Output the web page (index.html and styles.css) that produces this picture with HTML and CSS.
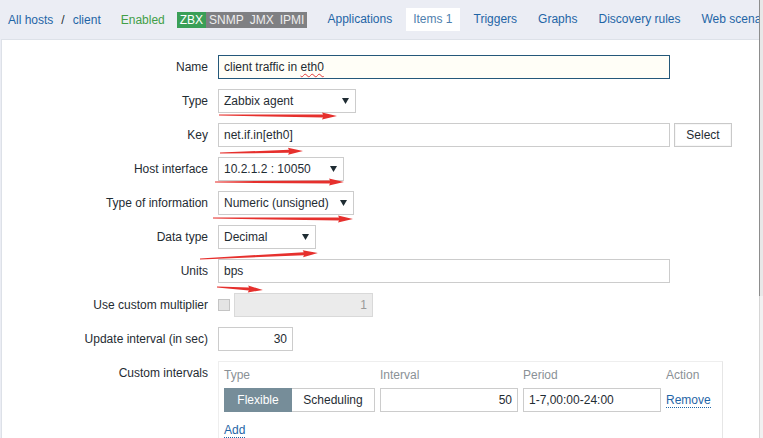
FILE: index.html
```html
<!DOCTYPE html>
<html>
<head>
<meta charset="utf-8">
<link rel="stylesheet" href="styles.css">
</head>
<body>
<div class="window">
  <div class="page">
    <div class="nav">
      <a class="link">All hosts</a>
      <span class="sep">/</span>
      <a class="link">client</a>
      <span class="status">Enabled</span>
      <span class="badges"><span class="bdg on">ZBX</span><span class="bdg">SNMP</span><span class="bdg">JMX</span><span class="bdg">IPMI</span></span>
      <div class="tabs">
        <a class="tab">Applications</a>
        <a class="tab active">Items 1</a>
        <a class="tab">Triggers</a>
        <a class="tab">Graphs</a>
        <a class="tab">Discovery rules</a>
        <a class="tab">Web scenarios</a>
      </div>
    </div>
    <div class="panel">
      <div class="form">
        <div class="label">Name</div>
        <div class="field"><div class="textbox wide focus">client traffic in <span class="spell">eth0</span></div></div>

        <div class="label">Type</div>
        <div class="field"><div class="select w-type"><span>Zabbix agent</span><svg class="caret" width="7" height="6" viewBox="0 0 7 6"><path d="M0 0H7L3.5 6Z"/></svg></div></div>

        <div class="label">Key</div>
        <div class="field row"><div class="textbox wide">net.if.in[eth0]</div><div class="btn">Select</div></div>

        <div class="label">Host interface</div>
        <div class="field"><div class="select w-host"><span>10.2.1.2 : 10050</span><svg class="caret" width="7" height="6" viewBox="0 0 7 6"><path d="M0 0H7L3.5 6Z"/></svg></div></div>

        <div class="label">Type of information</div>
        <div class="field"><div class="select w-info"><span>Numeric (unsigned)</span><svg class="caret" width="7" height="6" viewBox="0 0 7 6"><path d="M0 0H7L3.5 6Z"/></svg></div></div>

        <div class="label">Data type</div>
        <div class="field"><div class="select w-data"><span>Decimal</span><svg class="caret" width="7" height="6" viewBox="0 0 7 6"><path d="M0 0H7L3.5 6Z"/></svg></div></div>

        <div class="label">Units</div>
        <div class="field"><div class="textbox wide">bps</div></div>

        <div class="label">Use custom multiplier</div>
        <div class="field row"><span class="checkbox"></span><div class="textbox disabled num">1</div></div>

        <div class="label">Update interval (in sec)</div>
        <div class="field"><div class="textbox small num">30</div></div>

        <div class="label">Custom intervals</div>
        <div class="field">
          <div class="intervals">
            <div class="ih">Type</div>
            <div class="ih">Interval</div>
            <div class="ih">Period</div>
            <div class="ih">Action</div>
            <div class="seg"><span class="seg-on">Flexible</span><span class="seg-off">Scheduling</span></div>
            <div class="textbox num">50</div>
            <div class="textbox">1-7,00:00-24:00</div>
            <div class="act"><a class="dlink">Remove</a></div>
            <div class="add"><a class="dlink">Add</a></div>
          </div>
        </div>
      </div>
    </div>
    <svg class="marks" width="759" height="438" viewBox="0 0 759 438">
      <g fill="#e6302d">
        <path transform="translate(219 115) rotate(0.49)" d="M0 -.6L104 -1.5L103 -3.5L118 0L103 3.5L104 1.5L0 .6Z"/>
        <path transform="translate(220 153) rotate(-1.38)" d="M0 -.6L69 -1.5L68 -3.5L83 0L68 3.5L69 1.5L0 .6Z"/>
        <path transform="translate(215 182) rotate(0)" d="M0 -.6L115 -1.5L114 -3.5L129 0L114 3.5L115 1.5L0 .6Z"/>
        <path transform="translate(213 218) rotate(0.41)" d="M0 -.6L126 -1.5L125 -3.5L140 0L125 3.5L126 1.5L0 .6Z"/>
        <path transform="translate(200 259) rotate(-2.9)" d="M0 -.6L104 -1.5L103 -3.5L118 0L103 3.5L104 1.5L0 .6Z"/>
        <path transform="translate(217 287) rotate(3.7)" d="M0 -.6L32 -1.5L31 -3.5L46 0L31 3.5L32 1.5L0 .6Z"/>
      </g>
    </svg>
  </div>
  <div class="scrollbar"><div class="thumb"></div><div class="track"></div></div>
</div>
</body>
</html>
```

FILE: styles.css
```css
* { box-sizing: border-box; }
html, body { margin: 0; padding: 0; }
body {
  width: 763px;
  height: 438px;
  overflow: hidden;
  background: #ebedf4;
  font-family: "Liberation Sans", Arial, sans-serif;
  font-size: 12px;
  color: #1f2c33;
}
.window { display: flex; width: 763px; height: 438px; }
.page {
  position: relative;
  width: 759px;
  height: 438px;
  display: flex;
  flex-direction: column;
  overflow: hidden;
}
.scrollbar { width: 4px; display: flex; flex-direction: column; }
.thumb { height: 296px; border-left: 1px solid #8d8d8d; background: #e8e8e8; }
.track { flex: 1; border-left: 1px solid #d6d6d6; background: #f1f1f1; }

/* nav */
.nav {
  height: 39px;
  flex: none;
  display: flex;
  align-items: center;
  padding-left: 8px;
  white-space: nowrap;
}
.link { color: #1f65a6; }
.sep { margin: 0 8px; color: #1f2c33; }
.status { color: #429e47; margin-left: 20px; }
.badges { display: flex; margin-left: 12px; height: 16px; }
.bdg {
  display: block;
  height: 16px;
  line-height: 16px;
  padding: 0 3px;
  background: #7f8083;
  color: #eeeeee;
}
.bdg.on { background: #3a9f57; color: #ffffff; }
.tabs { display: flex; gap: 7px; margin-left: 13px; }
.tab {
  display: block;
  height: 23px;
  line-height: 23px;
  padding: 0 7px;
  color: #1f65a6;
}
.tab.active { background: #ffffff; color: #4f7fae; }

/* panel */
.panel {
  flex: 1;
  margin-left: 1px;
  background: #ffffff;
  border-left: 1px solid #dde1e8;
  border-top: 1px solid #dde1e8;
  padding-top: 15px;
}
.form {
  display: grid;
  grid-template-columns: 206px auto;
  column-gap: 10px;
  row-gap: 10px;
}
.label {
  text-align: right;
  line-height: 24px;
  white-space: nowrap;
}
.field { min-height: 24px; }
.row { display: flex; align-items: center; gap: 4px; }

.textbox {
  height: 24px;
  line-height: 22px;
  border: 1px solid #cccccc;
  padding: 0 5px;
  background: #ffffff;
  white-space: nowrap;
  overflow: hidden;
}
.textbox.wide { width: 452px; }
.textbox.focus { border-color: #24587a; background: #fffef7; }
.spell { text-decoration: underline wavy #e23b3b; text-decoration-thickness: 1px; text-underline-offset: 2px; }
.textbox.num { text-align: right; }
.textbox.small { width: 75px; }
.textbox.disabled { width: 139px; background: #ebebeb; border-color: #d9d9d9; color: #9a9a9a; }

.checkbox {
  width: 12px;
  height: 12px;
  border: 1px solid #c4c4c4;
  background: #e4e4e4;
  display: block;
}

.select {
  height: 24px;
  border: 1px solid #cccccc;
  padding: 0 6px 0 5px;
  display: flex;
  align-items: center;
  justify-content: space-between;
  background: #ffffff;
  white-space: nowrap;
}
.caret { fill: #1f2c33; }
.w-type { width: 138px; }
.w-host { width: 126px; }
.w-info { width: 136px; }
.w-data { width: 98px; }

.btn {
  width: 58px;
  height: 24px;
  line-height: 22px;
  border: 1px solid #c9c9c9;
  text-align: center;
  background: #ffffff;
  box-shadow: inset 0 0 0 1px #f7f7f7;
}

/* custom intervals */
.intervals {
  width: 505px;
  border: 1px solid #eeeeee;
  border-right-color: #e6e6e6;
  padding: 5px 9px 10px 5px;
  display: grid;
  grid-template-columns: 151px 138px 138px auto;
  column-gap: 5px;
  row-gap: 5px;
}
.ih { line-height: 16px; color: #8a9196; }
.seg { display: flex; height: 24px; }
.seg-on {
  width: 68px;
  background: #768d99;
  border: 1px solid #768d99;
  color: #ffffff;
  text-align: center;
  line-height: 22px;
}
.seg-off {
  width: 83px;
  border: 1px solid #cccccc;
  border-left: none;
  text-align: center;
  line-height: 22px;
}
.act { line-height: 24px; }
.dlink { color: #1f65a6; border-bottom: 1px dotted #1f65a6; }
.add { grid-column: 1 / -1; line-height: 16px; margin-top: 5px; }

.marks { position: absolute; left: 0; top: 0; pointer-events: none; }
```
